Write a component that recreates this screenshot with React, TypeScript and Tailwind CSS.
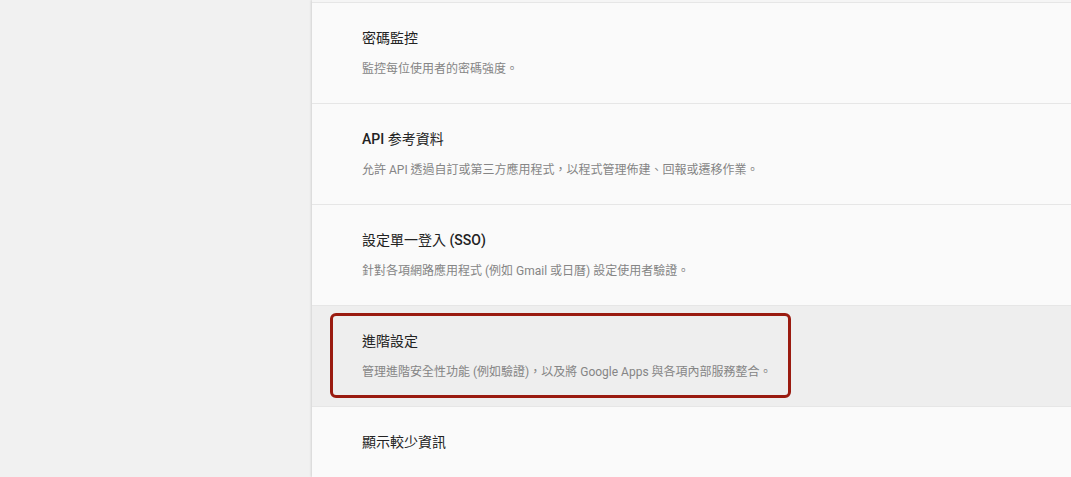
import React from "react";

const cjk = '"Roboto", "Noto Sans CJK TC", sans-serif';

type Row = { title: React.ReactNode; desc?: string; highlight?: boolean };

const rows: Row[] = [
  { title: "密碼監控", desc: "監控每位使用者的密碼強度。" },
  {
    title: (
      <>
        <span className="font-medium">API</span> 参考資料
      </>
    ),
    desc: "允許 API 透過自訂或第三方應用程式，以程式管理佈建、回報或遷移作業。",
  },
  {
    title: (
      <>
        設定單一登入 <span className="font-medium">(SSO)</span>
      </>
    ),
    desc: "針對各項網路應用程式 (例如 Gmail 或日曆) 設定使用者驗證。",
  },
  {
    title: "進階設定",
    desc: "管理進階安全性功能 (例如驗證)，以及將 Google Apps 與各項內部服務整合。",
    highlight: true,
  },
  { title: "顯示較少資訊" },
];

export default function App() {
  return (
    <div
      className="flex h-[477px] w-[1071px] overflow-hidden bg-[#f1f1f1]"
      style={{ fontFamily: cjk }}
    >
      <div className="w-[312px] shrink-0" />
      <div className="flex flex-1 flex-col bg-[#fafafa] shadow-[-1px_0_2px_rgba(0,0,0,0.12)]">
        <div className="h-[2px] shrink-0 bg-[#f5f5f5]" />
        {rows.map((r, i) => (
          <div
            key={i}
            className={`relative h-[101px] shrink-0 border-t border-[#e6e6e6] pl-[50px] pt-[25px] ${
              r.highlight ? "bg-[#eeeeee]" : "bg-[#fafafa]"
            }`}
          >
            <div className="text-[14px] leading-[20px] text-[#222222]">{r.title}</div>
            {r.desc && (
              <div className="mt-[13px] text-[12px] leading-[16px] text-[#858585]">{r.desc}</div>
            )}
            {r.highlight && (
              <div className="pointer-events-none absolute left-[18px] top-[7px] h-[85px] w-[461px] rounded-[6px] border-[3px] border-[#9a1b10]" />
            )}
          </div>
        ))}
      </div>
    </div>
  );
}
